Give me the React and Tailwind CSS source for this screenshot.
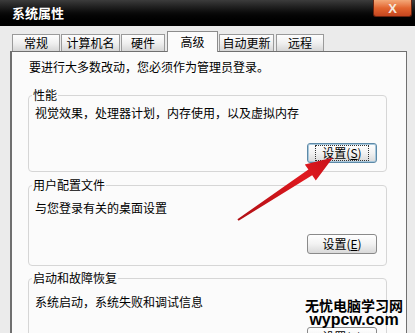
import React from "react";

const cjk = "font-['Noto_Sans_CJK_SC','Noto_Sans',sans-serif]";

function Tab({ label, w, selected, ml }) {
  if (selected) {
    return (
      <div
        className={`relative z-10 ${ml} ${w} h-[21px] -mb-px border border-b-0 border-[#8c8c8c] bg-[#fbfbfb] flex items-center justify-center text-[12px] leading-[16px] text-black pb-[1px]`}
      >
        {label}
      </div>
    );
  }
  return (
    <div
      className={`${ml} ${w} h-[17px] border border-b-0 border-[#9a9a9a] bg-gradient-to-b from-[#fdfdfd] via-[#f0f0f0] to-[#d6d6d6] flex items-center justify-center text-[12px] leading-[16px] text-black`}
    >
      {label}
    </div>
  );
}

function Btn({ children, focused }) {
  return (
    <div
      className={`w-[70px] h-[20px] rounded-[3px] flex items-center justify-center text-[12px] leading-[14px] text-black bg-gradient-to-b from-[#ffffff] via-[#f2f2f2] to-[#d9d9d9] ${
        focused ? "border border-[#5d8aa8] shadow-[inset_0_0_0_1px_#a9c8dc]" : "border border-[#8a8a8a]"
      }`}
    >
      <span
        className={`px-[6px] ${focused ? "outline outline-1 outline-dotted outline-[#333]" : ""}`}
      >
        {children}
      </span>
    </div>
  );
}

function Group({ label, text, btn, focused, mt, textMt, btnMt, pb }) {
  return (
    <fieldset
      className={`${mt} ml-[16px] w-[359px] border border-[#d6d6d6] rounded-[4px] px-[6px] ${pb} bg-[#fbfbfb]`}
    >
      <legend className="ml-[-3px] px-[1px] text-[12px] leading-[16px] text-black">{label}</legend>
      <div className={`${textMt} text-[12px] leading-[16px] text-black`}>{text}</div>
      <div className={`${btnMt} flex justify-end pr-[3px]`}>
        <Btn focused={focused}>{btn}</Btn>
      </div>
    </fieldset>
  );
}

export default function App() {
  return (
    <div className={`relative w-[415px] h-[333px] overflow-hidden bg-[#ebebeb] ${cjk}`}>
      {/* title bar */}
      <div className="h-[26px] flex justify-between items-start bg-gradient-to-b from-[#3c3c3c] via-[#0a0a0a] to-[#000000]">
        <div className="self-center pl-[12px] text-white font-bold text-[13px] leading-[16px]">系统属性</div>
        <div className="mr-[3px] w-[39px] h-[17px] rounded-b-[3px] border border-t-0 border-[#6b2410] bg-gradient-to-b from-[#f3a878] via-[#e2652f] to-[#c4451f] flex items-center justify-center text-[#f4e8dc] font-bold text-[13px] leading-none font-['Liberation_Sans',sans-serif]">
          X
        </div>
      </div>

      {/* tabs */}
      <div className="h-[25px] pl-[12px] flex items-end">
        <Tab label="常规" w="w-[48px]" ml="" />
        <Tab label="计算机名" w="w-[59px]" ml="ml-[1px]" />
        <Tab label="硬件" w="w-[44px]" ml="ml-[1px]" />
        <Tab label="高级" w="w-[51px]" ml="ml-[2px]" selected />
        <Tab label="自动更新" w="w-[55px]" ml="ml-[1px]" />
        <Tab label="远程" w="w-[48px]" ml="ml-[2px]" />
      </div>

      {/* panel */}
      <div className="ml-[10px] w-[397px] h-[300px] border-t border-r border-l-2 border-[#707070] bg-[#fbfbfb] pt-[7px]">
        <div className="pl-[17px] text-[12px] leading-[16px] text-black">
          要进行大多数改动，您必须作为管理员登录。
        </div>
        <Group
          label="性能"
          text="视觉效果，处理器计划，内存使用，以及虚拟内存"
          btn={<>设置(<u>S</u>)</>}
          focused
          mt="mt-[12px]"
          textMt="mt-[2px]"
          btnMt="mt-[22px]"
          pb="pb-[8px]"
        />
        <Group
          label="用户配置文件"
          text="与您登录有关的桌面设置"
          btn={<>设置(<u>E</u>)</>}
          mt="mt-[5px]"
          textMt="mt-[7px]"
          btnMt="mt-[18px]"
          pb="pb-[11px]"
        />
        <Group
          label="启动和故障恢复"
          text="系统启动，系统失败和调试信息"
          btn={<>设置(<u>T</u>)</>}
          mt="mt-[4px]"
          textMt="mt-[8px]"
          btnMt="mt-[17px]"
          pb="pb-[8px]"
        />
      </div>

      {/* red arrow */}
      <svg className="absolute left-0 top-0 pointer-events-none" width="415" height="333" viewBox="0 0 415 333">
        <defs>
          <linearGradient id="ar" x1="238" y1="220" x2="332" y2="158" gradientUnits="userSpaceOnUse">
            <stop offset="0" stopColor="#b01015" />
            <stop offset="0.7" stopColor="#e0191f" />
            <stop offset="1" stopColor="#c8121a" />
          </linearGradient>
        </defs>
        <polygon
          points="237.4,219.2 308.4,169.6 304.8,164.4 333,157.5 315.8,180.4 312.2,175.2 238.6,220.8"
          fill="url(#ar)"
        />
      </svg>

      {/* watermark */}
      <div className="absolute left-[305px] top-[297px] flex flex-col items-center text-black">
        <div className="font-bold text-[14px] leading-[16px] tracking-[0px] font-['Noto_Sans_CJK_SC',sans-serif]">无忧电脑学习网</div>
        <div className="font-bold text-[16px] leading-[14px] font-['Liberation_Sans',sans-serif]">wypcw.com</div>
      </div>
    </div>
  );
}
